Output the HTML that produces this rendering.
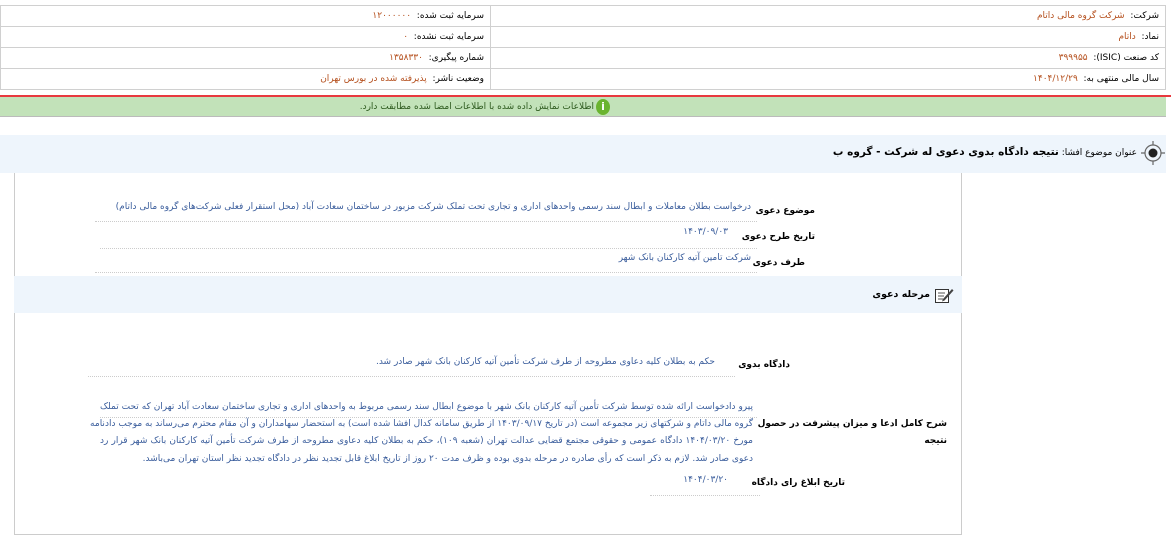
<!DOCTYPE html>
<html><head><meta charset="utf-8"><style>
*{margin:0;padding:0;box-sizing:border-box}
body{width:1171px;height:560px;background:#fff;font-family:"DejaVu Sans","Noto Sans CJK SC",sans-serif;font-size:9px;position:relative;overflow:hidden;direction:rtl}
.a{position:absolute;white-space:nowrap}
.v{color:#b5501e}
.b{color:#3a5d9c}
.dot{position:absolute;border-top:1px dotted #ccc;height:0}
table{position:absolute;left:0;top:5px;width:1166px;border-collapse:collapse}
td{border:1px solid #d0d0d0;height:21px;padding:0 6px;font-size:9px;text-align:right}
.j{position:absolute;white-space:nowrap;text-align:justify;text-align-last:justify;line-height:17px}
</style></head><body>
<table dir="rtl">
<tr><td style="width:675px">شرکت: &nbsp;<span class="v">شرکت گروه مالی داتام</span></td><td>سرمایه ثبت شده: &nbsp;<span class="v">۱۲۰۰۰۰۰۰</span></td></tr>
<tr><td>نماد: &nbsp;<span class="v">داتام</span></td><td>سرمایه ثبت نشده: &nbsp;<span class="v">۰</span></td></tr>
<tr><td>کد صنعت (ISIC): &nbsp;<span class="v">۳۹۹۹۵۵</span></td><td>شماره پیگیری: &nbsp;<span class="v">۱۳۵۸۳۳۰</span></td></tr>
<tr><td>سال مالی منتهی به: &nbsp;<span class="v">۱۴۰۴/۱۲/۲۹</span></td><td>وضعیت ناشر: &nbsp;<span class="v">پذیرفته شده در بورس تهران</span></td></tr>
</table>
<div style="position:absolute;left:0;top:95px;width:1171px;height:2px;background:#e8393e"></div>
<div style="position:absolute;left:0;top:97px;width:1166px;height:20px;background:#c2e2b9;border-bottom:1px solid #bbb"></div>
<div class="a" style="right:561px;top:99px;display:flex;align-items:center;gap:2px;color:#2d5a1e">
<span style="display:inline-block;width:14px;height:16px;border-radius:50%;background:#6ab42f;color:#fff;font-weight:bold;font-size:11px;text-align:center;line-height:16px">i</span>
<span style="line-height:16px">اطلاعات نمایش داده شده با اطلاعات امضا شده مطابقت دارد.</span></div>

<div style="position:absolute;left:0;top:135px;width:1166px;height:38px;background:#eef5fc"></div>
<svg style="position:absolute;left:1140px;top:140px" width="26" height="26" viewBox="0 0 26 26"><circle cx="13" cy="13" r="8" fill="none" stroke="#666" stroke-width="1.2"/><circle cx="13" cy="13" r="4.5" fill="#222"/><path d="M13 1v4M13 21v4M1 13h4M21 13h4" stroke="#666" stroke-width="1.2"/></svg>
<div class="a" style="right:34px;top:146px;font-size:9px">عنوان موضوع افشا: <b style="font-size:10.5px">نتیجه دادگاه بدوی دعوی له شرکت - گروه ب</b></div>

<div style="position:absolute;left:14px;top:173px;width:948px;height:362px;border:1px solid #ccc;border-top:none"></div>

<div class="a" style="right:356px;top:206px;font-weight:bold">موضوع دعوی</div>
<div class="a b" style="right:420px;top:202px">درخواست بطلان معاملات و ابطال سند رسمی واحدهای اداری و تجاری تحت تملک شرکت مزبور در ساختمان سعادت آباد (محل استقرار فعلی شرکت‌های گروه مالی داتام)</div>
<div class="dot" style="left:95px;width:662px;top:221px"></div>
<div class="a" style="right:356px;top:232px;font-weight:bold">تاریخ طرح دعوی</div>
<div class="a b" style="right:443px;top:227px">۱۴۰۳/۰۹/۰۳</div>
<div class="dot" style="left:100px;width:657px;top:248px"></div>
<div class="a" style="right:366px;top:258px;font-weight:bold">طرف دعوی</div>
<div class="a b" style="right:420px;top:253px">شرکت تامین آتیه کارکنان بانک شهر</div>
<div class="dot" style="left:95px;width:662px;top:272px"></div>

<div style="position:absolute;left:14px;top:276px;width:948px;height:37px;background:#eef5fc"></div>
<svg style="position:absolute;left:934px;top:286px" width="20" height="18" viewBox="0 0 20 18"><rect x="1.5" y="3.5" width="13" height="13" fill="#fff" stroke="#333"/><path d="M4 7h7M4 10h6M4 13h5" stroke="#555"/><path d="M9 13l9-10 1.5 1.5-9 10-2.5 1z" fill="#444"/></svg>
<div class="a" style="right:241px;top:289px;font-weight:bold;font-size:9.5px">مرحله دعوی</div>

<div class="a" style="right:381px;top:360px;font-weight:bold">دادگاه بدوی</div>
<div class="a b" style="right:456px;top:357px">حکم به بطلان کلیه دعاوی مطروحه از طرف شرکت تأمین آتیه کارکنان بانک شهر صادر شد.</div>
<div class="dot" style="left:88px;width:647px;top:376px"></div>

<div class="a" style="right:224px;top:416px;font-weight:bold;line-height:17px">شرح کامل ادعا و میزان پیشرفت در حصول<br>نتیجه</div>
<div class="j b" style="right:418px;top:399px;width:653px">پیرو دادخواست ارائه شده توسط شرکت تأمین آتیه کارکنان بانک شهر با موضوع ابطال سند رسمی مربوط به واحدهای اداری و تجاری ساختمان سعادت آباد تهران که تحت تملک</div>
<div class="dot" style="left:100px;width:657px;top:417px"></div>
<div class="j b" style="right:418px;top:416px;width:653px">گروه مالی داتام و شرکتهای زیر مجموعه است (در تاریخ ۱۴۰۳/۰۹/۱۷ از طریق سامانه کدال افشا شده است) به استحضار سهامداران و آن مقام محترم می‌رساند به موجب دادنامه</div>
<div class="j b" style="right:418px;top:433px;width:653px">مورخ ۱۴۰۴/۰۳/۲۰ دادگاه عمومی و حقوقی مجتمع قضایی عدالت تهران (شعبه ۱۰۹)، حکم به بطلان کلیه دعاوی مطروحه از طرف شرکت تأمین آتیه کارکنان بانک شهر قرار رد</div>
<div class="a b" style="right:418px;top:451px;line-height:17px">دعوی صادر شد. لازم به ذکر است که رأی صادره در مرحله بدوی بوده و ظرف مدت ۲۰ روز از تاریخ ابلاغ قابل تجدید نظر در دادگاه تجدید نظر استان تهران می‌باشد.</div>

<div class="a" style="right:326px;top:478px;font-weight:bold">تاریخ ابلاغ رای دادگاه</div>
<div class="a b" style="right:443px;top:475px">۱۴۰۴/۰۳/۲۰</div>
<div class="dot" style="left:650px;width:110px;top:495px"></div>
</body></html>
